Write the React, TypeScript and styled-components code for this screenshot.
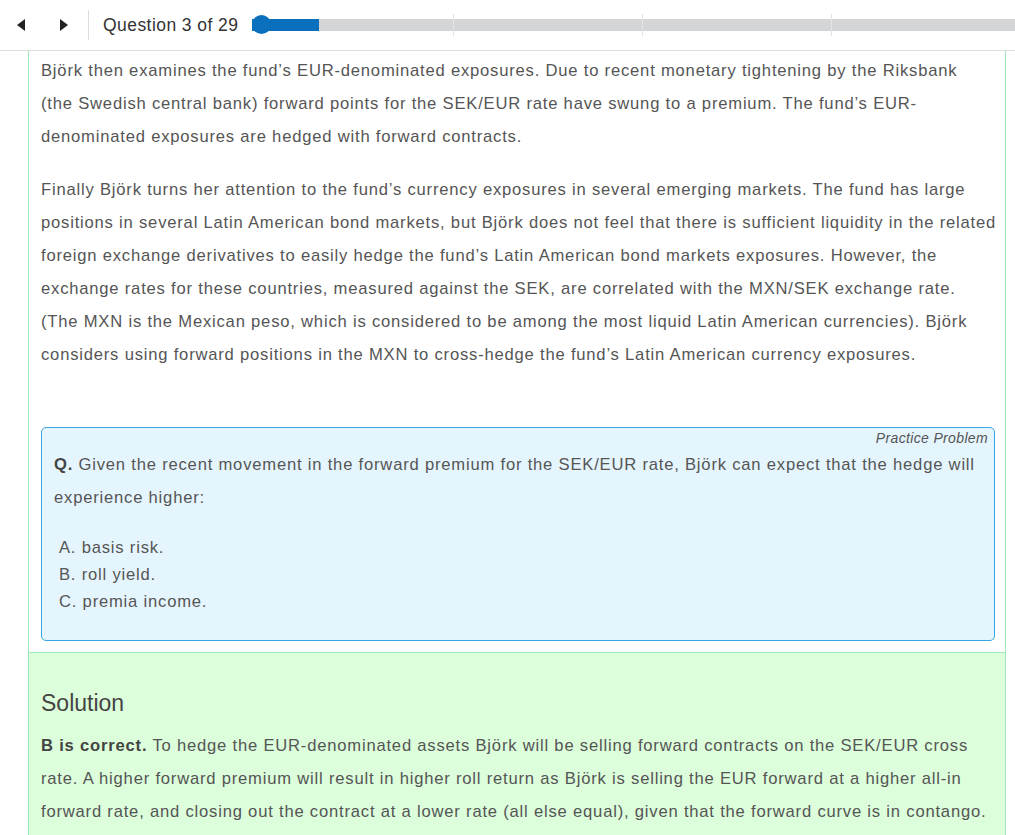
import React from "react";
import styled, { createGlobalStyle } from "styled-components";

const GlobalStyle = createGlobalStyle`
  html, body {
    margin: 0;
    padding: 0;
    background: #fff;
    font-family: "Liberation Sans", Arial, sans-serif;
    color: #555;
  }
  body {
    width: 1015px;
    height: 835px;
    overflow: hidden;
  }
`;

const progressLeft = 252;
const ticks = [453, 642, 831];

export default function App() {
  return (
    <>
      <GlobalStyle />
      <TopBar>
        <NavButton aria-label="Previous">
          <svg width="10" height="12" viewBox="0 0 10 12">
            <polygon points="9,0 9,12 1,6" fill="#222" />
          </svg>
        </NavButton>
        <NavButton aria-label="Next">
          <svg width="10" height="12" viewBox="0 0 10 12">
            <polygon points="1,0 1,12 9,6" fill="#222" />
          </svg>
        </NavButton>
        <Divider />
        <Counter>Question 3 of 29</Counter>
        <Progress>
          <Track />
          <Fill style={{ width: 67 }} />
          <Knob />
          {ticks.map((x) => (
            <Tick key={x} style={{ left: x - progressLeft }} />
          ))}
        </Progress>
      </TopBar>
      <Panel>
        <Body>
          <Para>
            Björk then examines the fund’s EUR-denominated exposures. Due to recent monetary tightening by the Riksbank
            <br />
            (the Swedish central bank) forward points for the SEK/EUR rate have swung to a premium. The fund’s EUR-
            <br />
            denominated exposures are hedged with forward contracts.
          </Para>
          <Para>
            Finally Björk turns her attention to the fund’s currency exposures in several emerging markets. The fund has large
            <br />
            positions in several Latin American bond markets, but Björk does not feel that there is sufficient liquidity in the related
            <br />
            foreign exchange derivatives to easily hedge the fund’s Latin American bond markets exposures. However, the
            <br />
            exchange rates for these countries, measured against the SEK, are correlated with the MXN/SEK exchange rate.
            <br />
            (The MXN is the Mexican peso, which is considered to be among the most liquid Latin American currencies). Björk
            <br />
            considers using forward positions in the MXN to cross-hedge the fund’s Latin American currency exposures.
          </Para>
          <ProblemBox>
            <ProblemLabel>Practice Problem</ProblemLabel>
            <Question>
              <b>Q.</b> Given the recent movement in the forward premium for the SEK/EUR rate, Björk can expect that the hedge will
              <br />
              experience higher:
            </Question>
            <Options>
              <li>A. basis risk.</li>
              <li>B. roll yield.</li>
              <li>C. premia income.</li>
            </Options>
          </ProblemBox>
        </Body>
        <Solution>
          <SolutionTitle>Solution</SolutionTitle>
          <Para>
            <b>B is correct.</b> To hedge the EUR-denominated assets Björk will be selling forward contracts on the SEK/EUR cross
            <br />
            rate. A higher forward premium will result in higher roll return as Björk is selling the EUR forward at a higher all-in
            <br />
            forward rate, and closing out the contract at a lower rate (all else equal), given that the forward curve is in contango.
          </Para>
        </Solution>
      </Panel>
    </>
  );
}

const TopBar = styled.div`
  display: flex;
  align-items: center;
  height: 50px;
  border-bottom: 1px solid #ddd;
  box-sizing: content-box;
  padding-left: 12px;
`;

const NavButton = styled.button`
  display: flex;
  align-items: center;
  justify-content: center;
  width: 18px;
  height: 30px;
  margin-right: 25px;
  padding: 0;
  border: none;
  background: none;
  cursor: pointer;
`;

const Divider = styled.div`
  width: 1px;
  height: 30px;
  background: #ddd;
  margin-left: -10px;
  margin-right: 14px;
`;

const Counter = styled.span`
  font-size: 17.5px;
  letter-spacing: 0.44px;
  color: #333;
  margin-right: 14px;
  white-space: nowrap;
`;

const Progress = styled.div`
  position: relative;
  flex: 1;
  height: 22px;
`;

const Track = styled.div`
  position: absolute;
  left: 0;
  right: 0;
  top: 5px;
  height: 12px;
  background: #d4d5d7;
`;

const Fill = styled.div`
  position: absolute;
  left: 0;
  top: 5px;
  height: 12px;
  background: #0a6fbd;
`;

const Knob = styled.div`
  position: absolute;
  left: 0;
  top: 1px;
  width: 19px;
  height: 19px;
  border-radius: 50%;
  background: #0a6fbd;
`;

const Tick = styled.div`
  position: absolute;
  top: 0;
  width: 1px;
  height: 22px;
  background: #e2e3e5;
`;

const Panel = styled.div`
  margin: 0 9px 0 28px;
  border-left: 1px solid #9fe6b8;
  border-right: 1px solid #9fe6b8;
  overflow: hidden;
`;

const Body = styled.div`
  padding: 3px 10px 11px 12px;
`;

const Para = styled.p`
  margin: 0 0 20px;
  font-size: 16.6px;
  letter-spacing: 0.8px;
  line-height: 33px;
  white-space: nowrap;
  color: #555;
  b {
    color: #444;
  }
`;

const ProblemBox = styled.div`
  margin-top: 56px;
  background: #e5f5fe;
  border: 1px solid #39a6e5;
  border-radius: 5px;
  padding: 0 6px 25px 12px;
`;

const ProblemLabel = styled.div`
  text-align: right;
  font-style: italic;
  font-size: 14px;
  letter-spacing: 0.35px;
  line-height: 20px;
  color: #555;
`;

const Question = styled.p`
  margin: 0 0 20px;
  font-size: 16.6px;
  letter-spacing: 0.8px;
  line-height: 33px;
  white-space: nowrap;
  b {
    color: #444;
  }
`;

const Options = styled.ul`
  list-style: none;
  margin: 0;
  padding: 0 0 0 5px;
  li {
    font-size: 16.6px;
    letter-spacing: 0.8px;
    line-height: 27px;
  }
`;

const Solution = styled.div`
  background: #dcfedb;
  border-top: 1px solid #9fe6b8;
  padding: 33px 8px 20px 12px;
`;

const SolutionTitle = styled.h2`
  margin: 0 0 9px;
  font-weight: normal;
  font-size: 23px;
  line-height: 34px;
  color: #444;
`;
